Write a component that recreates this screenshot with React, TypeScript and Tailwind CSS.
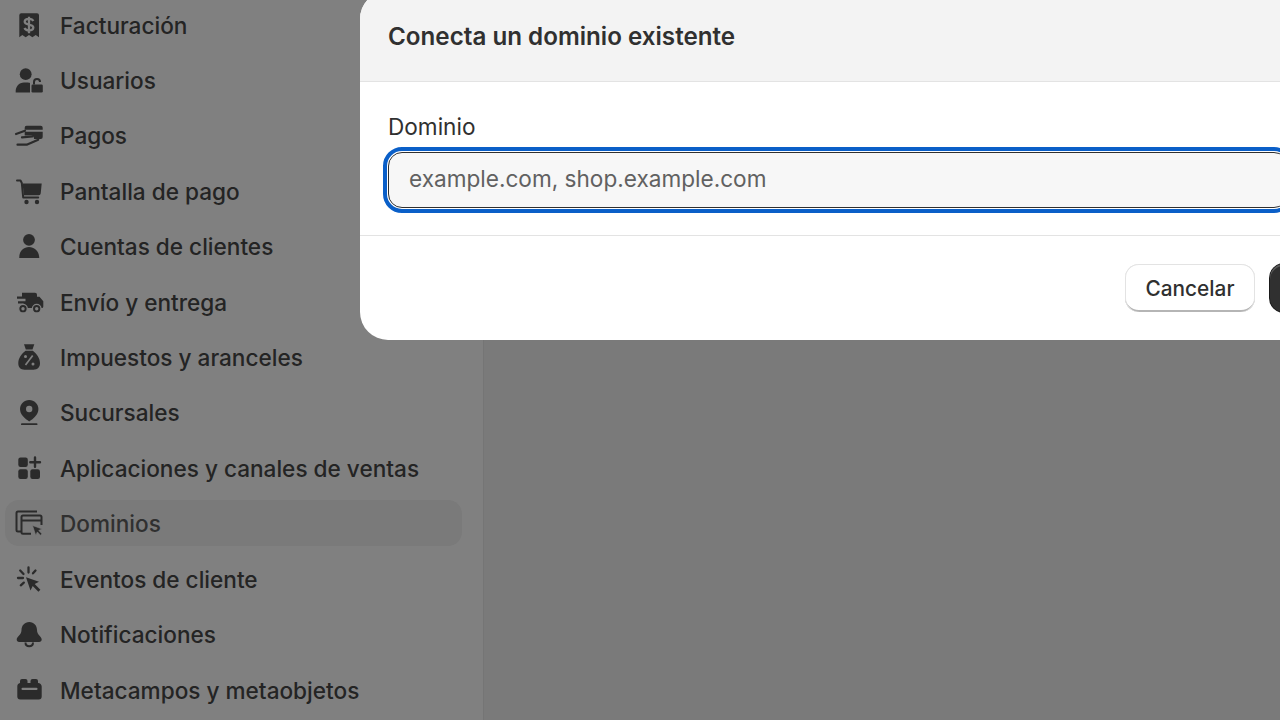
const c = "#2b2b2b";
const bg = "#808080";
const icons: Record<string, React.ReactNode> = {
  receipt: (
    <>
      <path d="M8.300 4.300h15.700a2 2 0 0 1 2 2v22l-3.300-2.200-3.300 2.200-3.400-2.200-3.300 2.200-3.400-2.200-3 2.200v-22a2 2 0 0 1 2-2z" fill={c} />
      <path d="M20.300 12c-.6-1.500-2.300-2.200-4.300-2.200-2.400 0-4.300 1-4.300 2.900 0 3.800 8.600 1.900 8.600 5.800 0 1.900-1.900 2.900-4.300 2.900-2.200 0-3.800-.8-4.500-2.400M16 7.800v16.400" stroke={bg} strokeWidth="2.300" fill="none" />
    </>
  ),
  users: (
    <>
      <circle cx="12.700" cy="10.200" r="5.900" fill={c} />
      <path d="M2.700 28.500c-.6-6 3.500-10 8.300-10h3c1.500 0 2.600.3 3 .5v9.500z" fill={c} />
      <rect x="18.500" y="20.500" width="11.300" height="8" rx="1.200" fill={c} />
      <path d="M21 20.500v-2.500a3 3 0 0 1 6 0" stroke={c} strokeWidth="2" fill="none" />
    </>
  ),
  pay: (
    <>
      <path d="M13.500 6.700h14.200a2 2 0 0 1 2 2v2h-18v-2a2 2 0 0 1 1.800-2zM11.700 12.700h18v5.300a2 2 0 0 1-2 2H21a3 3 0 0 0-3-3.500h-6.300z" fill={c} />
      <path d="M3 15l9-3.200M9 18.300l10.500-.8M4.500 25.700h9.200l11.500-5" stroke={c} strokeWidth="2.200" fill="none" strokeLinecap="round" strokeLinejoin="round" />
    </>
  ),
  cart: (
    <>
      <path d="M4 5.500h3.500l1.300 2.500 1.400 14.500h15" stroke={c} strokeWidth="2" fill="none" strokeLinecap="round" strokeLinejoin="round" />
      <path d="M9.500 8.500h19.200l-1 10a2 2 0 0 1-2 1.800H11z" fill={c} />
      <circle cx="13.500" cy="27" r="2.200" fill={c} />
      <circle cx="24" cy="27" r="2.200" fill={c} />
    </>
  ),
  person: (
    <>
      <circle cx="16" cy="9.800" r="5.900" fill={c} />
      <path d="M6.300 28c-.4-6.500 4-11 9.700-11s10.100 4.500 10.300 11z" fill={c} />
    </>
  ),
  truck: (
    <>
      <path d="M9 6.700h13a2 2 0 0 1 2 2v2h2.500l3.800 4.500v5.300a1.500 1.500 0 0 1-1.500 1.500H7v-2.800h3.500V17.500H5v-2.300h7.500v-2.500H4v-2.300h5z" fill={c} />
      <circle cx="10" cy="22.700" r="4.300" fill={c} stroke={bg} strokeWidth="1.300" />
      <circle cx="23.700" cy="22.700" r="4.300" fill={c} stroke={bg} strokeWidth="1.300" />
      <circle cx="10" cy="22.700" r="1.700" fill={bg} />
      <circle cx="23.700" cy="22.700" r="1.700" fill={bg} />
    </>
  ),
  bag: (
    <>
      <path d="M11 3.300h10.300l-1.800 5.200h-6.700z" fill={c} />
      <path d="M12.500 9.800h7.300c4 3 7.200 7.500 7.200 12.500 0 4-2.500 6.400-6.500 6.400h-9c-4 0-6.200-2.400-6.200-6.400 0-5 3.200-9.500 7.200-12.500z" fill={c} />
      <path d="M19.700 14.500l-7.200 9.500" stroke={bg} strokeWidth="1.700" />
      <circle cx="12.500" cy="15.500" r="1.500" fill={bg} />
      <circle cx="20" cy="23" r="1.500" fill={bg} />
    </>
  ),
  pin: (
    <>
      <path d="M16.200 4c5.100 0 9.200 4 9.200 9.100 0 5.700-5 9.800-9.200 12.400C12 22.900 7 18.800 7 13.100 7 8 11.100 4 16.200 4z" fill={c} />
      <circle cx="16.200" cy="13" r="3.200" fill={bg} />
      <rect x="8" y="27.200" width="16.500" height="1.900" rx=".9" fill={c} />
    </>
  ),
  apps: (
    <>
      <rect x="5.300" y="5.500" width="9.500" height="9.500" rx="2.200" fill={c} />
      <rect x="5.300" y="17.300" width="9.500" height="9.700" rx="2.200" fill={c} />
      <rect x="17.300" y="17.300" width="9.700" height="9.700" rx="2.200" fill={c} />
      <path d="M22 5.500v9.300M17.300 10.200h9.700" stroke={c} strokeWidth="2.400" strokeLinecap="round" />
    </>
  ),
  domain: (
    <>
      <path d="M8 24.500H5a1.500 1.500 0 0 1-1.500-1.500V6a1.500 1.500 0 0 1 1.500-1.500h19" stroke={c} strokeWidth="2" fill="none" />
      <path d="M18 26.800h-8a1.500 1.500 0 0 1-1.500-1.500V10a1.500 1.500 0 0 1 1.500-1.500h17a1.500 1.500 0 0 1 1.500 1.500v8M8.500 13.500h20" stroke={c} strokeWidth="2" fill="none" />
      <path d="M19.500 18.500l9.700 3.500-3.500 1.500 3.300 3.300-1.500 1.400-3.200-3.300-1.500 3.600z" fill={c} stroke={bg} strokeWidth=".6" />
    </>
  ),
  cursor: (
    <>
      <path d="M13 14.200l13 4.500-4.300 2.300 5.700 5.800-2 2-5.700-5.700-2.200 4.400z" fill={c} />
      <path d="M15.500 4.500v5M7.200 7.500l3.300 3.500M5 15h5M7.800 22.300l3-2.700M22.500 7.500l-2.500 2.800" stroke={c} strokeWidth="2.300" strokeLinecap="round" />
    </>
  ),
  bell: (
    <>
      <path d="M16.300 4c4.700 0 7.700 3.700 7.700 8 0 5 4.700 6.700 4.700 9.500 0 1.500-1 2.500-2.600 2.500H6.200c-1.600 0-2.500-1-2.500-2.500 0-2.800 4.800-4.500 4.800-9.500 0-4.300 3-8 7.800-8z" fill={c} />
      <path d="M12.500 24.500c0 2.500 1.500 3.700 3.700 3.700s3.800-1.200 3.800-3.700" stroke={c} strokeWidth="2" fill="none" />
    </>
  ),
  meta: (
    <>
      <path d="M9 6h3.500a2 2 0 0 1 2 2v2h3V8a2 2 0 0 1 2-2H23a2 2 0 0 1 2 2v2a3.500 3.500 0 0 1 3.700 3.500v10a3 3 0 0 1-3 3H7.300a3 3 0 0 1-3-3v-10A3.500 3.500 0 0 1 7 10V8a2 2 0 0 1 2-2z" fill={c} />
      <rect x="8.500" y="14.800" width="16" height="2.200" rx="1" fill={bg} />
    </>
  ),
};

const rows: [string, string][] = [
  ["receipt", "Facturación"],
  ["users", "Usuarios"],
  ["pay", "Pagos"],
  ["cart", "Pantalla de pago"],
  ["person", "Cuentas de clientes"],
  ["truck", "Envío y entrega"],
  ["bag", "Impuestos y aranceles"],
  ["pin", "Sucursales"],
  ["apps", "Aplicaciones y canales de ventas"],
  ["domain", "Dominios"],
  ["cursor", "Eventos de cliente"],
  ["bell", "Notificaciones"],
  ["meta", "Metacampos y metaobjetos"],
];

export default function App() {
  return (
    <div className="relative flex h-[720px] w-[1280px] overflow-hidden bg-[#7a7a7a] font-['Inter',sans-serif]">
      <nav className="flex h-[720px] w-[484px] shrink-0 flex-col gap-[9.42px] border-r border-[#757575] bg-[#808080] pl-[5px] pr-[21px] pt-[1.6px]">
        {rows.map(([icon, label]) => (
          <div
            key={label}
            className={`flex h-[46px] shrink-0 items-center gap-[15px] rounded-[14px] pl-[8px] text-[22.6px] font-medium ${
              label === "Dominios" ? "bg-[#7a7a7a] text-[#303030]" : "text-[#242424]"
            }`}
          >
            <svg viewBox="0 0 32 32" className="h-8 w-8 shrink-0">
              {icons[icon]}
            </svg>
            <span className="whitespace-nowrap pt-[2px]">{label}</span>
          </div>
        ))}
      </nav>
      <div className="absolute left-[360px] top-[-9px] flex h-[349px] w-[1000px] flex-col overflow-hidden rounded-[28px] bg-white">
        <div className="flex h-[91px] shrink-0 items-center border-b border-[#e3e3e3] bg-[#f3f3f3] pl-[28px] pt-[2px]">
          <h2 className="text-[24.2px] font-semibold text-[#303030]">Conecta un dominio existente</h2>
        </div>
        <div className="flex h-[154px] shrink-0 flex-col border-b border-[#e3e3e3] pl-[28px] pt-[31px]">
          <label className="text-[22.6px] leading-[28px] text-[#303030]">Dominio</label>
          <input
            readOnly
            placeholder="example.com, shop.example.com"
            className="mt-[11px] h-[56px] w-[900px] rounded-[14px] border border-[#303030] bg-[#f7f7f7] pb-[3px] pl-[20px] text-[22.6px] text-[#303030] outline outline-[4px] outline-offset-[1px] outline-[#0a5fc8] placeholder:text-[#616161]"
          />
        </div>
        <div className="flex flex-1 items-start gap-[15px] pl-[765px] pt-[28px]">
          <button className="h-[48px] w-[130px] shrink-0 rounded-[14px] bg-white pt-[1px] text-[20.8px] font-medium text-[#303030] shadow-[0_1px_0_0_#e3e3e3_inset,1px_0_0_0_#e3e3e3_inset,-1px_0_0_0_#e3e3e3_inset,0_-2px_0_0_#b5b5b5_inset]">
            Cancelar
          </button>
          <button className="h-[48px] w-[100px] shrink-0 rounded-[14px] bg-[#303030] shadow-[0_0_0_1px_#1a1a1a,0_2px_0_0_#5a5a5a_inset]" />
        </div>
      </div>
    </div>
  );
}
